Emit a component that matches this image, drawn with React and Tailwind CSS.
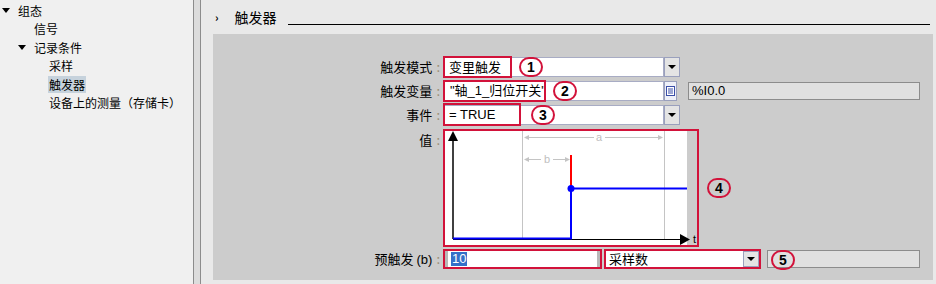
import React from 'react';

const RED = 'border-[#d2123a]';

function Tri() {
  return <span className="inline-block w-0 h-0 border-l-[4px] border-r-[4px] border-t-[5px] border-l-transparent border-r-transparent border-t-black" />;
}

function Mark({ n, className }) {
  return (
    <div
      className={`absolute flex h-[20px] w-[24px] items-center justify-center rounded-full border-2 ${RED} text-[14px] font-bold leading-none text-black ${className}`}
      style={{ fontFamily: '"Liberation Sans", sans-serif' }}
    >
      {n}
    </div>
  );
}

function DropButton() {
  return (
    <div className="flex h-full w-[16px] items-center justify-center border border-[#9aa0bd] bg-[#e4e4e4]">
      <span className="inline-block w-0 h-0 border-l-[4px] border-r-[4px] border-t-[4px] border-l-transparent border-r-transparent border-t-black" />
    </div>
  );
}

function Label({ children, top }) {
  return (
    <div className={`flex w-[227px] shrink-0 justify-end text-[13px] text-black ${top ? 'self-start pt-[1px]' : ''}`}>
      <span>{children}</span>
      <span className="ml-[4px] text-[#9a8c74]">:</span>
    </div>
  );
}

function TreeItem({ indent, arrow, selected, children }) {
  return (
    <div className="flex h-[18.5px] items-center" style={{ paddingLeft: indent }}>
      <div className="flex w-[15px] shrink-0 items-center">{arrow && <Tri />}</div>
      <span className={`px-[1px] leading-[17px] ${selected ? 'bg-[#c6d2dc]' : ''}`}>{children}</span>
    </div>
  );
}

function Chart() {
  return (
    <svg width="252" height="114" className="block">
      <rect x="0" y="0" width="242" height="114" fill="#ffffff" />
      <rect x="242" y="0" width="10" height="114" fill="#cccccc" />
      <line x1="77.5" y1="0" x2="77.5" y2="108" stroke="#c4c4c4" />
      <line x1="219.5" y1="0" x2="219.5" y2="108" stroke="#c4c4c4" />
      {/* a */}
      <line x1="80" y1="6.5" x2="149" y2="6.5" stroke="#c4c4c4" />
      <line x1="160" y1="6.5" x2="217" y2="6.5" stroke="#c4c4c4" />
      <polygon points="79,6.5 84,4 84,9" fill="#c4c4c4" />
      <polygon points="218,6.5 213,4 213,9" fill="#c4c4c4" />
      <text x="154" y="10" fontSize="11" textAnchor="middle" fill="#c0c0c0" fontFamily="Liberation Sans, sans-serif">a</text>
      {/* b */}
      <line x1="80" y1="28.5" x2="96" y2="28.5" stroke="#c4c4c4" />
      <line x1="108" y1="28.5" x2="124" y2="28.5" stroke="#c4c4c4" />
      <polygon points="79,28.5 84,26 84,31" fill="#c4c4c4" />
      <polygon points="125,28.5 120,26 120,31" fill="#c4c4c4" />
      <text x="102" y="32" fontSize="11" textAnchor="middle" fill="#c0c0c0" fontFamily="Liberation Sans, sans-serif">b</text>
      {/* axes */}
      <line x1="8" y1="108" x2="8" y2="8" stroke="#000" strokeWidth="1.5" />
      <polygon points="3,10 13,10 8,0" fill="#000" />
      <line x1="8" y1="108.5" x2="236" y2="108.5" stroke="#000" />
      <polygon points="235,103 235,114 245,108.5" fill="#000" />
      <text x="248" y="112" fontSize="11" fill="#000" fontFamily="Liberation Sans, sans-serif">t</text>
      {/* signal */}
      <line x1="126" y1="24" x2="126" y2="57" stroke="#ff0000" strokeWidth="2" />
      <polyline points="8,107.5 126,107.5 126,57.5 242,57.5" fill="none" stroke="#0000ff" strokeWidth="2" />
      <circle cx="126" cy="57.5" r="3.5" fill="#0000ff" />
    </svg>
  );
}

export default function App() {
  const cjk = { fontFamily: '"Noto Sans CJK SC", "Liberation Sans", sans-serif' };
  const latin = { fontFamily: '"Liberation Sans", "Noto Sans CJK SC", sans-serif' };

  return (
    <div className="flex h-[284px] w-[936px] overflow-hidden bg-[#ececec] text-[13px] text-black" style={cjk}>
      {/* tree */}
      <div className="w-[193px] shrink-0 bg-[#f0f0f0] pt-[1px] pl-[2px] text-[12px]">
        <TreeItem indent={0} arrow>组态</TreeItem>
        <TreeItem indent={16}>信号</TreeItem>
        <TreeItem indent={16} arrow>记录条件</TreeItem>
        <TreeItem indent={31}>采样</TreeItem>
        <TreeItem indent={31} selected>触发器</TreeItem>
        <TreeItem indent={31}>设备上的测量（存储卡）</TreeItem>
      </div>
      <div className="w-[8px] shrink-0 border-x border-x-[#8c8c8c] bg-[#dcdcdc]" />

      {/* content */}
      <div className="flex flex-1 flex-col bg-[#e9e9e9]">
        <div className="flex h-[34px] shrink-0 items-center pl-[14px] pr-[6px]">
          <span className="text-[11px] font-bold leading-none">›</span>
          <span className="ml-[16px] text-[14px]">触发器</span>
          <div className="ml-[11px] mt-[15px] h-px flex-1 bg-black" />
        </div>

        <div className="ml-[12px] mr-[3px] h-[246px] bg-[#cccccc] pt-[21px]">
          {/* row 1 */}
          <div className="flex h-[24px] items-center">
            <Label>触发模式</Label>
            <div className="relative ml-[4px] flex h-[20px] w-[236px]">
              <div className="flex flex-1 items-center border border-[#a8acc4] bg-white pl-[4px]">变里触发</div>
              <DropButton />
              <div className={`absolute -left-px -top-px h-[22px] w-[69px] border-2 ${RED}`} />
              <Mark n="1" className="left-[75px] top-0" />
            </div>
          </div>

          {/* row 2 */}
          <div className="flex h-[24px] items-center">
            <Label>触发变量</Label>
            <div className="relative ml-[4px] flex h-[20px] w-[233px]">
              <div className="flex flex-1 items-center border border-[#a8acc4] bg-white pl-[5px]" style={latin}>"轴_1_归位开关"</div>
              <div className="flex h-full w-[13px] items-center justify-center border border-[#9aa0bd] bg-[#eef0f8]">
                <svg width="9" height="10" viewBox="0 0 9 10">
                  <rect x="0.5" y="0.5" width="8" height="9" fill="#fff" stroke="#3a4ea8" strokeWidth="1" />
                  <line x1="2" y1="3" x2="7" y2="3" stroke="#3a4ea8" />
                  <line x1="2" y1="5" x2="7" y2="5" stroke="#3a4ea8" />
                  <line x1="2" y1="7" x2="7" y2="7" stroke="#3a4ea8" />
                </svg>
              </div>
              <div className={`absolute -left-px -top-px h-[22px] w-[103px] border-2 ${RED}`} />
              <Mark n="2" className="left-[109px] top-0" />
            </div>
            <div className="ml-[11px] flex h-[18px] w-[232px] items-center border border-[#8c8c8c] bg-[#e0e0e0] pl-[3px]" style={latin}>%I0.0</div>
          </div>

          {/* row 3 */}
          <div className="flex h-[24px] items-center">
            <Label>事件</Label>
            <div className="relative ml-[4px] flex h-[20px] w-[236px]">
              <div className="flex flex-1 items-center border border-[#a8acc4] bg-white pl-[4px]" style={latin}>= TRUE</div>
              <DropButton />
              <div className={`absolute -left-px -top-[2px] h-[23px] w-[78px] border-2 ${RED}`} />
              <Mark n="3" className="left-[87px] top-0" />
            </div>
          </div>

          {/* row 4 */}
          <div className="mt-[2px] flex h-[118px]">
            <Label top>值</Label>
            <div className={`relative ml-[3px] h-[118px] w-[256px] border-2 ${RED} bg-white`}>
              <Chart />
              <Mark n="4" className="left-[262px] top-[47px]" />
            </div>
          </div>

          {/* row 5 */}
          <div className="flex h-[24px] items-center">
            <Label>
              预触发 <span style={latin}>(b)</span>
            </Label>
            <div className={`ml-[3px] flex h-[20px] w-[159px] items-center border-2 ${RED} bg-white`}>
              <div className="flex h-full flex-1 items-center border-l-[3px] border-l-[#b8b8b8] pl-[3px]">
                <span className="bg-[#3470c8] px-px leading-[14px] text-white" style={latin}>10</span>
              </div>
              <div className="h-full w-[3px] bg-[#b8b8b8]" />
            </div>
            <div className={`ml-[2px] flex h-[20px] w-[157px] border-2 ${RED} bg-white`}>
              <div className="flex flex-1 items-center pl-[3px]">采样数</div>
              <DropButton />
            </div>
            <div className="relative ml-[6px] flex h-[18px] w-[153px] border border-[#8c8c8c] bg-[#e0e0e0]">
              <Mark n="5" className="left-[3px] -top-px" />
            </div>
          </div>
        </div>
      </div>
    </div>
  );
}
